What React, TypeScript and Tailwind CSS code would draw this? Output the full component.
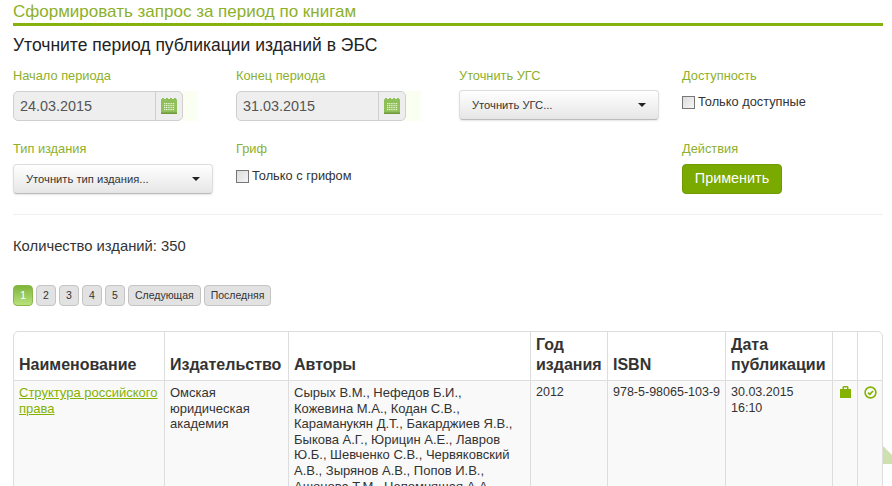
import React from "react";

const labelCls = "text-[12.8px] leading-[18px] text-[#8db02b]";

const calendarDots = [0, 1, 2, 3, 4, 5];

const CalendarIcon = () => (
  <svg width="16" height="16" viewBox="0 0 16 16">
    <rect x="0" y="1" width="16" height="15" rx="1" fill="#8fbf57" />
    <rect x="0" y="14.5" width="16" height="1.5" fill="#6f9a3e" />
    {[1, 5, 9, 13].map((x) => (
      <rect key={x} x={x} y="0" width="2" height="2" fill="#8fbf57" />
    ))}
    {[5, 7, 9, 11].map((y) =>
      calendarDots.map((i) => (
        <rect key={`${y}-${i}`} x={3 + i * 1.8} y={y} width="1.2" height="1.2" fill="#e4f1d2" />
      ))
    )}
  </svg>
);

const DateField = ({ value }: { value: string }) => (
  <div className="flex h-[30px] w-[185px]">
    <div className="flex h-[30px] w-[170px] rounded-[5px] border border-[#cfcfcf] bg-[#eeeeee]">
      <div className="flex-1 pl-[6px] text-[14.4px] leading-[28px] text-[#555555]">{value}</div>
      <div className="flex w-[27px] items-center justify-center border-l border-[#cfcfcf]">
        <CalendarIcon />
      </div>
    </div>
    <div className="h-[30px] w-[15px] bg-[#fafff2]" />
  </div>
);

const Select = ({ text }: { text: string }) => (
  <div className="flex h-[30px] w-[200px] items-center justify-between rounded-[4px] border border-[#dddddd] border-b-[#bbbbbb] bg-gradient-to-b from-white to-[#e6e6e6] pl-[12px] pr-[12px] text-[11.2px] text-[#333333] shadow-[0_1px_2px_rgba(0,0,0,0.1)]">
    <span>{text}</span>
    <span className="h-0 w-0 border-x-[4px] border-t-[4px] border-x-transparent border-t-[#222222]" />
  </div>
);

const Check = ({ text }: { text: string }) => (
  <div className="flex h-[20px] items-center gap-[3px] text-[12.8px] text-[#333333]">
    <span className="h-[13px] w-[13px] border border-[#777777] bg-gradient-to-br from-[#dcdcdc] to-[#f5f5f5]" />
    <span>{text}</span>
  </div>
);

const Field = ({ label, children }: { label: string; children: React.ReactNode }) => (
  <div className="w-[223px] shrink-0">
    <div className={labelCls}>{label}</div>
    {children}
  </div>
);

const PageBtn = ({ text, active }: { text: string; active?: boolean }) => (
  <div
    className={
      active
        ? "flex h-[21px] min-w-[20px] items-center justify-center rounded-[4px] border border-[#8ab547] bg-gradient-to-b from-[#7fb53a] to-[#b9e27c] px-[5px] text-[11px] text-white"
        : "flex h-[21px] min-w-[20px] items-center justify-center rounded-[4px] border border-[#c4c4c4] bg-[#e2e2e2] px-[6px] text-[10.5px] text-[#333333]"
    }
  >
    {text}
  </div>
);

const thCls = "border-l border-[#dddddd] px-[5px] pb-[5px] pt-[3px] align-bottom text-left text-[16px] font-bold leading-[20px] text-[#333333] first:border-l-0";
const tdCls = "border-l border-t border-[#dddddd] px-[5px] pt-[4px] align-top text-[13px] leading-[15.6px] text-[#333333] first:border-l-0";
const numCls = "border-l border-t border-[#dddddd] px-[5px] pt-[4px] align-top text-[12.5px] leading-[15.6px] text-[#333333]";

export default function App() {
  return (
    <div className="relative h-[486px] w-[892px] overflow-hidden bg-white font-['Liberation_Sans',Arial,sans-serif]">
      <svg width="9" height="18" viewBox="0 0 9 18" className="absolute left-[883px] top-[446px]">
        <polygon points="0,0 9,9 9,18 0,18" fill="#cfe0b0" />
      </svg>
      <div className="ml-[13px] w-[870px]">
        <div className="h-[26px] border-b-[3px] border-[#84b20f] pt-[2px] text-[17px] leading-[20px] text-[#8db02b]">
          Сформировать запрос за период по книгам
        </div>
        <h2 className="mt-[8px] text-[17.5px] leading-[22px] text-[#222222]">Уточните период публикации изданий в ЭБС</h2>

        <div className="mt-[11px] flex h-[73px]">
          <Field label="Начало периода">
            <div className="mt-[6px]"><DateField value="24.03.2015" /></div>
          </Field>
          <Field label="Конец периода">
            <div className="mt-[6px]"><DateField value="31.03.2015" /></div>
          </Field>
          <Field label="Уточнить УГС">
            <div className="mt-[5px]"><Select text="Уточнить УГС..." /></div>
          </Field>
          <Field label="Доступность">
            <div className="mt-[7px]"><Check text="Только доступные" /></div>
          </Field>
        </div>

        <div className="flex h-[74px]">
          <Field label="Тип издания">
            <div className="mt-[6px]"><Select text="Уточнить тип издания..." /></div>
          </Field>
          <Field label="Гриф">
            <div className="mt-[8px]"><Check text="Только с грифом" /></div>
          </Field>
          <div className="w-[223px] shrink-0" />
          <Field label="Действия">
            <div className="mt-[6px] flex h-[30px] w-[100px] items-center justify-center rounded-[4px] border border-[#6f9a00] bg-[#7aa900] text-[14.4px] text-white">
              Применить
            </div>
          </Field>
        </div>

        <div className="h-px bg-[#f0f0f0]" />

        <div className="mt-[22px] text-[14.8px] leading-[18px] text-[#333333]">Количество изданий: 350</div>

        <div className="mt-[30px] flex gap-[3px]">
          <PageBtn text="1" active />
          <PageBtn text="2" />
          <PageBtn text="3" />
          <PageBtn text="4" />
          <PageBtn text="5" />
          <PageBtn text="Следующая" />
          <PageBtn text="Последняя" />
        </div>

        <div className="mt-[25px] overflow-hidden rounded-t-[5px] border border-[#dddddd]">
          <table className="w-[868px] table-fixed border-separate border-spacing-0">
            <colgroup>
              <col className="w-[150px]" />
              <col className="w-[124px]" />
              <col className="w-[242px]" />
              <col className="w-[77px]" />
              <col className="w-[118px]" />
              <col className="w-[107px]" />
              <col className="w-[25px]" />
              <col className="w-[25px]" />
            </colgroup>
            <thead>
              <tr>
                <th className={thCls}>Наименование</th>
                <th className={thCls}>Издательство</th>
                <th className={thCls}>Авторы</th>
                <th className={thCls}>Год издания</th>
                <th className={thCls}>ISBN</th>
                <th className={thCls}>Дата публикации</th>
                <th className={thCls} />
                <th className={thCls} />
              </tr>
            </thead>
            <tbody>
              <tr className="h-[200px] bg-[#f9f9f9]">
                <td className={tdCls}>
                  <a className="text-[#84b200] underline">Структура российского права</a>
                </td>
                <td className={tdCls}>Омская юридическая академия</td>
                <td className={`${tdCls} pr-[12px]`}>
                  Сырых В.М., Нефедов Б.И., Кожевина М.А., Кодан С.В., Караманукян Д.Т., Бакарджиев Я.В., Быкова А.Г., Юрицин А.Е., Лавров Ю.Б., Шевченко С.В., Червяковский А.В., Зырянов А.В., Попов И.В., Ашонова Т.М., Непомнящая А.А.
                </td>
                <td className={numCls}>2012</td>
                <td className={`${numCls} whitespace-nowrap`}>978-5-98065-103-9</td>
                <td className={`${numCls} pr-[20px]`}>30.03.2015 16:10</td>
                <td className={tdCls}>
                  <svg width="11" height="12" viewBox="0 0 11 12" className="ml-[2px] mt-[1px]">
                    <rect x="0" y="3" width="11" height="9" fill="#84b200" />
                    <path fillRule="evenodd" d="M2.5 3.5V1.5C2.5.5 3.2 0 4 0h3c.8 0 1.5.5 1.5 1.5v2H7V1.5H4v2z" fill="#84b200" />
                  </svg>
                </td>
                <td className={tdCls}>
                  <svg width="13" height="13" viewBox="0 0 13 13" className="ml-[1px] mt-[1px]">
                    <circle cx="6.5" cy="6.5" r="5.4" fill="none" stroke="#84b200" strokeWidth="1.6" />
                    <path d="M4 6.6l1.9 1.8L9 5" fill="none" stroke="#84b200" strokeWidth="1.6" />
                  </svg>
                </td>
              </tr>
            </tbody>
          </table>
        </div>
      </div>
    </div>
  );
}
